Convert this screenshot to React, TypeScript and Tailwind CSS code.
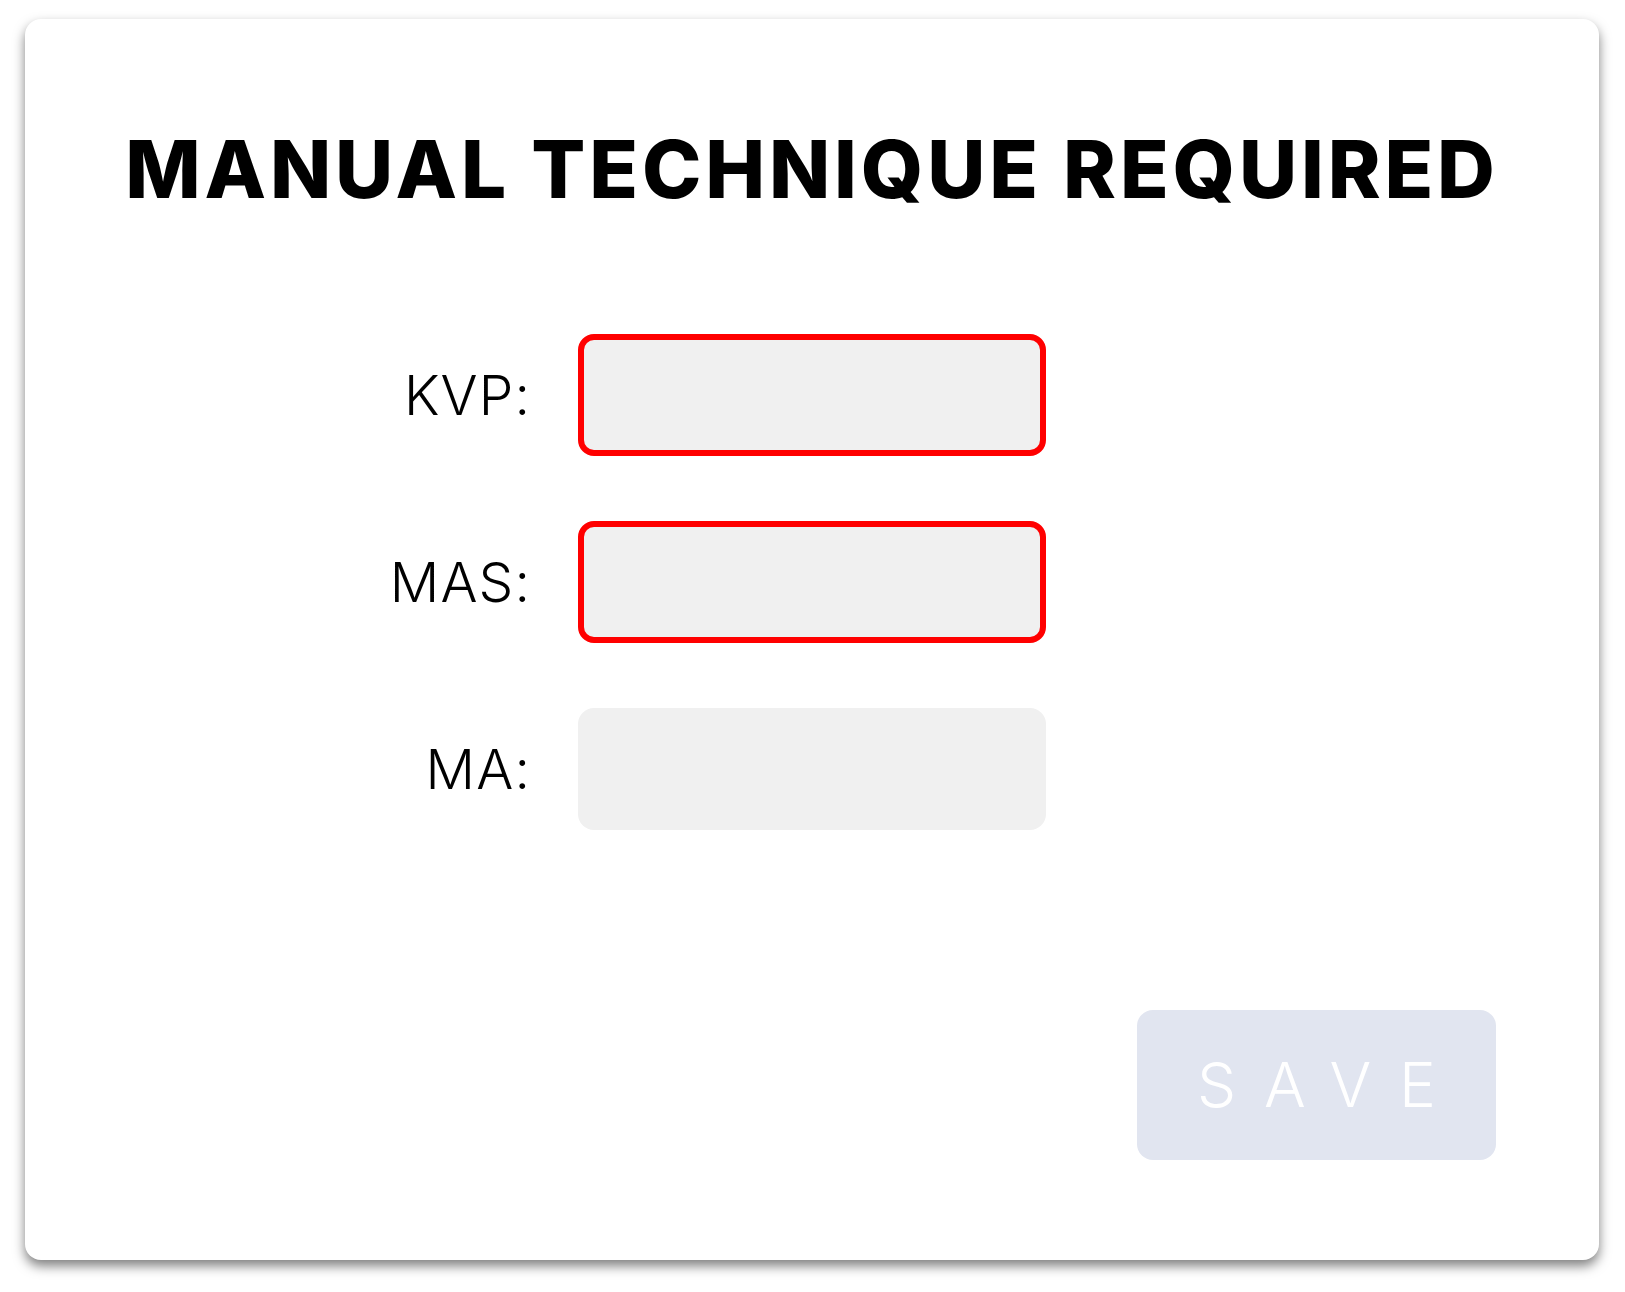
import React from 'react';

const fieldNames = ['KVP', 'MAS', 'MA'];
const invalid: Record<string, boolean> = { KVP: true, MAS: true, MA: false };

const Field: React.FC<{ label: string; error: boolean }> = ({ label, error }) => (
  <div className="flex items-center gap-[47px]">
    <label className="w-[403px] text-right text-[55px] font-light leading-none tracking-[0.02em] text-black">
      {label}:
    </label>
    <input
      type="text"
      className={
        error
          ? 'w-[468px] h-[122px] rounded-[16px] bg-[#f0f0f0] border-[6px] border-[#ff0000] outline-none'
          : 'w-[468px] h-[122px] rounded-[16px] bg-[#f0f0f0] border-0 outline-none'
      }
    />
  </div>
);

export default function App() {
  return (
    <div
      className="min-h-[1292px] bg-white pt-[19px] pl-[25px]"
      style={{ fontFamily: 'Inter, "Noto Sans", sans-serif' }}
    >
      <div className="w-[1574px] h-[1241px] rounded-[16px] bg-white shadow-[0_6px_12px_rgba(0,0,0,0.5)] flex flex-col px-[103px] pt-[110px] pb-[100px]">
        <h1 className="-mx-[60px] whitespace-nowrap text-center text-[80px] font-extrabold leading-none tracking-[0.048em] text-black">
          MANUAL TECHNIQUE REQUIRED
        </h1>

        <div className="mt-[125px] flex flex-col gap-[65px]">
          {fieldNames.map((name) => (
            <Field key={name} label={name} error={invalid[name]} />
          ))}
        </div>

        <div className="mt-auto flex justify-end">
          <button
            disabled
            className="w-[359px] h-[150px] rounded-[16px] bg-[#e1e5f0] text-white text-[62px] font-light leading-none tracking-[0.45em] pl-[0.45em]"
          >
            SAVE
          </button>
        </div>
      </div>
    </div>
  );
}
